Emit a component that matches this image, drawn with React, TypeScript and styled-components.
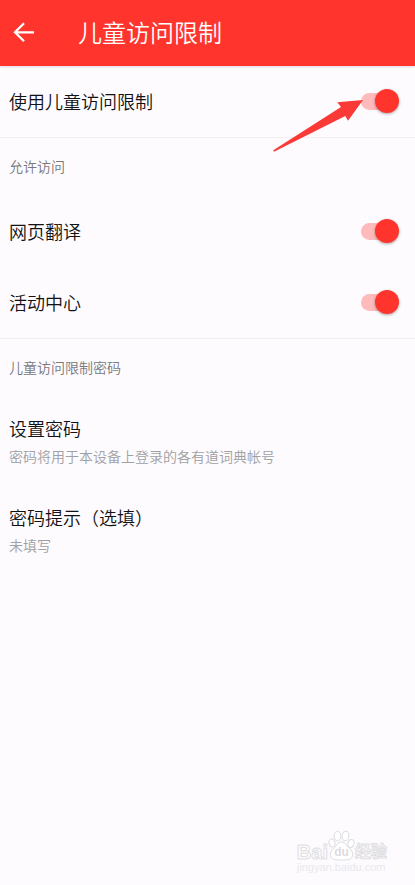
import React, { useState } from "react";
import styled, { createGlobalStyle } from "styled-components";

const GlobalStyle = createGlobalStyle`
  *, *::before, *::after { box-sizing: border-box; }
  body {
    margin: 0;
    background: #fdfbfe;
    color: #121113;
    font-family: "Noto Sans CJK SC", sans-serif;
    font-weight: 350;
  }
  button { font: inherit; color: inherit; }
`;

const Screen = styled.div`
  display: flex;
  flex-direction: column;
  min-height: 100vh;
`;

const AppBar = styled.header`
  display: flex;
  align-items: center;
  height: 66px;
  padding: 0 0 2px 12px;
  gap: 42px;
  background: #ff352d;
  color: #fff;
  box-shadow: 0 1px 2px rgba(80, 40, 60, 0.16);
`;

const BackButton = styled.button`
  display: flex;
  padding: 0;
  border: 0;
  background: none;
  cursor: pointer;
`;

const Title = styled.h1`
  margin: 0;
  font-size: 24px;
  line-height: 32px;
  font-weight: 350;
`;

const Group = styled.section<{ $divided?: boolean }>`
  border-bottom: ${(p) => (p.$divided ? "1px solid #f1eff2" : "0")};
`;

const GroupTitle = styled.h2`
  margin: 0;
  padding: 18px 9px 20px;
  font-size: 14px;
  line-height: 20px;
  font-weight: 350;
  color: #79787b;
`;

const SwitchRow = styled.div`
  position: relative;
  display: flex;
  align-items: center;
  justify-content: space-between;
  height: 71px;
  padding: 0 16px 2px 9px;
`;

const RowLabel = styled.label`
  flex: 1;
  font-size: 18px;
  line-height: 26px;
`;

const Switch = styled.input`
  appearance: none;
  position: relative;
  width: 38px;
  height: 24px;
  margin: 0;
  cursor: pointer;

  &::before {
    content: "";
    position: absolute;
    inset: 4px 4px 3px 0;
    border-radius: 9px;
    background: #d0ced2;
  }
  &::after {
    content: "";
    position: absolute;
    top: 0;
    left: 0;
    width: 24px;
    height: 24px;
    border-radius: 50%;
    background: #f4f2f5;
    box-shadow: 0 1px 3px rgba(0, 0, 0, 0.35);
  }
  &:checked::before { background: #ffbabb; }
  &:checked::after { left: 14px; background: #ff352d; }
`;

const Pointer = styled.svg`
  position: absolute;
  top: 33px;
  right: 52px;
  pointer-events: none;
`;

const Entry = styled.button`
  display: flex;
  flex-direction: column;
  gap: 5px;
  width: 100%;
  padding: 18px 9px 20px;
  border: 0;
  background: none;
  text-align: left;
  cursor: pointer;
`;

const EntryTitle = styled.span`
  font-size: 18px;
  line-height: 26px;
`;

const EntryNote = styled.span`
  font-size: 14px;
  line-height: 20px;
  color: #a09fa2;
`;

const Watermark = styled.footer`
  display: flex;
  flex-direction: column;
  align-self: flex-end;
  margin: auto 28px 11px 0;
  color: #fff;
  font-family: "Liberation Sans", "Noto Sans CJK SC", sans-serif;
  font-weight: 700;
`;

const Brand = styled.div`
  display: flex;
  align-items: flex-end;
  height: 31px;
`;

const BrandText = styled.span<{ $size: number }>`
  font-size: ${(p) => p.$size}px;
  line-height: 18px;
  -webkit-text-stroke: 1px #e0dee2;
`;

const Site = styled.span`
  font-size: 11px;
  line-height: 13px;
  font-weight: 400;
  color: #eae8ec;
`;

function ToggleItem({ id, label, children }: { id: string; label: string; children?: React.ReactNode }) {
  const [on, setOn] = useState(true);
  return (
    <SwitchRow>
      <RowLabel htmlFor={id}>{label}</RowLabel>
      <Switch id={id} type="checkbox" role="switch" checked={on} onChange={() => setOn(!on)} />
      {children}
    </SwitchRow>
  );
}

function EntryItem({ title, note }: { title: string; note: string }) {
  return (
    <Entry type="button">
      <EntryTitle>{title}</EntryTitle>
      <EntryNote>{note}</EntryNote>
    </Entry>
  );
}

export default function App() {
  return (
    <>
      <GlobalStyle />
      <Screen>
        <AppBar>
          <BackButton type="button" aria-label="返回">
            <svg width="24" height="24" viewBox="0 0 24 24" fill="none" stroke="#fff" strokeWidth="2.3">
              <path d="M22 12.3H3.5M12 3.3l-9 9 9 9" />
            </svg>
          </BackButton>
          <Title>儿童访问限制</Title>
        </AppBar>
        <main>
          <Group $divided>
            <ToggleItem id="limit" label="使用儿童访问限制">
              <Pointer width="90" height="53" viewBox="0 0 90 53" aria-hidden="true">
                <path d="M90 1 64.3 3.3 68 8 .3 51.2l.7 1.5L72.3 17l2.7 4.8z" fill="#fb3936" />
              </Pointer>
            </ToggleItem>
          </Group>
          <Group $divided>
            <GroupTitle>允许访问</GroupTitle>
            <ToggleItem id="translate" label="网页翻译" />
            <ToggleItem id="activity" label="活动中心" />
          </Group>
          <Group>
            <GroupTitle>儿童访问限制密码</GroupTitle>
            <EntryItem title="设置密码" note="密码将用于本设备上登录的各有道词典帐号" />
            <EntryItem title="密码提示（选填）" note="未填写" />
          </Group>
        </main>
        <Watermark>
          <Brand>
            <BrandText $size={20}>Bai</BrandText>
            <svg width="27" height="31" viewBox="0 0 27 31" fill="#fff" stroke="#dedce0" strokeWidth="1">
              <ellipse cx="4" cy="13" rx="3" ry="4" transform="rotate(-15 4 13)" />
              <ellipse cx="9.5" cy="6" rx="3.4" ry="4.8" />
              <ellipse cx="17.5" cy="6" rx="3.4" ry="4.8" transform="rotate(8 17.5 6)" />
              <ellipse cx="23" cy="13.5" rx="3" ry="4" transform="rotate(12 23 13.5)" />
              <path d="M13.5 12c-4 0-4.5 3.5-7 5.5C3.5 20 2 22 2.5 25.500c.6 4.500 4.500 4.500 11 4.500s10.400 0 11-4.500c.5-3.500-1-5.500-4-8C18 15.500 17.500 12 13.500 12z" />
              <text x="13.500" y="26" textAnchor="middle" fontSize="12" stroke="none" fill="#dddbdf">du</text>
            </svg>
            <BrandText $size={16}>经验</BrandText>
          </Brand>
          <Site>jingyan.baidu.com</Site>
        </Watermark>
      </Screen>
    </>
  );
}
